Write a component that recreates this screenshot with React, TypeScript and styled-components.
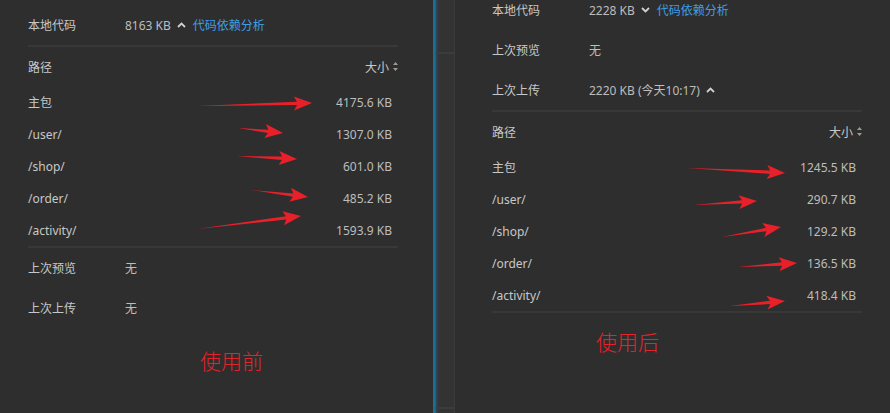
import styled, { createGlobalStyle } from "styled-components";

const GlobalStyle = createGlobalStyle`
  body {
    margin: 0;
    background: #2e2e2e;
    font-family: "Noto Sans", "Noto Sans CJK SC", sans-serif;
  }
`;

const Page = styled.div`
  position: relative;
  width: 890px;
  height: 413px;
  display: flex;
  overflow: hidden;
  background: #2e2e2e;
  font-size: 12px;
`;

const Pane = styled.div<{ $pad: number; $shift?: number }>`
  display: flex;
  flex-direction: column;
  padding-left: ${(p) => p.$pad}px;
  margin-top: ${(p) => p.$shift || 0}px;
  width: 370px;
  flex-shrink: 0;
`;

const Splitter = styled.div`
  width: 22px;
  flex-shrink: 0;
  margin-left: 35px;
  margin-right: 1px;
  background: linear-gradient(to right, #1f6d99 0, #1f6d99 2px, #2c4e61 3px, #33383b 5px, #333 7px);
  border-right: 1px solid #3a3a3a;
  display: flex;
  flex-direction: column;
  justify-content: space-between;
  padding: 52px 0 4px;
  box-sizing: border-box;

  span {
    display: block;
    height: 2px;
    margin-left: 3px;
    background: #3c3c3c;
  }
`;

const InfoRow = styled.div`
  height: 40px;
  display: flex;
  align-items: center;
  color: #c8c8c8;
`;

const Label = styled.div`
  width: 97px;
  flex-shrink: 0;
`;

const Value = styled.div`
  display: flex;
  align-items: center;
  gap: 6px;
  color: #bdbdbd;
`;

const Link = styled.span`
  color: #3f9fe6;
  margin-left: 1px;
`;

const Divider = styled.div`
  height: 2px;
  background: #383838;
`;

const HeadRow = styled.div`
  height: 39px;
  display: flex;
  align-items: center;
  justify-content: space-between;
  color: #c8c8c8;
`;

const SortBy = styled.div`
  display: flex;
  align-items: center;
  gap: 4px;
`;

const DataRow = styled.div`
  height: 32px;
  display: flex;
  align-items: center;
  justify-content: space-between;
  padding-right: 6px;
  color: #c8c8c8;

  span:last-child {
    color: #bdbdbd;
  }
`;

const Caption = styled.div<{ $left: number; $top: number }>`
  margin: ${(p) => p.$top}px 0 0 ${(p) => p.$left}px;
  font-family: "Noto Sans CJK SC", sans-serif;
  font-weight: 300;
  font-size: 21px;
  line-height: 24px;
  color: #e3242b;
`;

const Overlay = styled.svg`
  position: absolute;
  left: 0;
  top: 0;
  pointer-events: none;
`;

function Chevron({ up }: { up?: boolean }) {
  return (
    <svg width="9" height="6" viewBox="0 0 9 6">
      <path
        d={up ? "M1 5 L4.5 1.5 L8 5" : "M1 1 L4.5 4.5 L8 1"}
        fill="none"
        stroke="#d0d0d0"
        strokeWidth="1.8"
      />
    </svg>
  );
}

function SortIcon() {
  return (
    <svg width="5" height="9" viewBox="0 0 5 9">
      <path d="M2.5 0 L5 3 L0 3 Z M2.5 9 L5 6 L0 6 Z" fill="#9a9a9a" />
    </svg>
  );
}

// red annotation arrows drawn over the screenshot
function arrowPoints(x1: number, y1: number, x2: number, y2: number) {
  const dx = x2 - x1;
  const dy = y2 - y1;
  const len = Math.hypot(dx, dy);
  const ux = dx / len;
  const uy = dy / len;
  const nx = -uy;
  const ny = ux;
  const head = 15;
  const half = 7;
  const shaft = 1.7;
  const bx = x2 - ux * head;
  const by = y2 - uy * head;
  const hx = bx - ux * 3;
  const hy = by - uy * 3;
  const pts = [
    [x1, y1],
    [bx + nx * shaft, by + ny * shaft],
    [hx + nx * half, hy + ny * half],
    [x2, y2],
    [hx - nx * half, hy - ny * half],
    [bx - nx * shaft, by - ny * shaft],
  ];
  return pts.map((p) => p.map((v) => v.toFixed(1)).join(",")).join(" ");
}

const arrows = [
  [197, 106, 312, 103],
  [238, 128, 283, 133],
  [237, 156, 297, 159],
  [252, 190, 308, 197],
  [197, 229, 301, 216],
  [687, 168, 785, 173],
  [694, 205, 757, 201],
  [722, 237, 781, 227],
  [738, 267, 797, 263],
  [730, 306, 785, 301],
];

const before = [
  ["主包", "4175.6 KB"],
  ["/user/", "1307.0 KB"],
  ["/shop/", "601.0 KB"],
  ["/order/", "485.2 KB"],
  ["/activity/", "1593.9 KB"],
];

const after = [
  ["主包", "1245.5 KB"],
  ["/user/", "290.7 KB"],
  ["/shop/", "129.2 KB"],
  ["/order/", "136.5 KB"],
  ["/activity/", "418.4 KB"],
];

function Table({ rows }: { rows: string[][] }) {
  return (
    <>
      <HeadRow>
        <span>路径</span>
        <SortBy>
          大小 <SortIcon />
        </SortBy>
      </HeadRow>
      {rows.map(([path, size]) => (
        <DataRow key={path}>
          <span>{path}</span>
          <span>{size}</span>
        </DataRow>
      ))}
      <Divider />
    </>
  );
}

export default function App() {
  return (
    <>
      <GlobalStyle />
      <Page>
        <Pane $pad={28} $shift={5}>
          <InfoRow>
            <Label>本地代码</Label>
            <Value>
              8163 KB <Chevron up /> <Link>代码依赖分析</Link>
            </Value>
          </InfoRow>
          <Divider />
          <Table rows={before} />
          <InfoRow>
            <Label>上次预览</Label>
            <Value>无</Value>
          </InfoRow>
          <InfoRow>
            <Label>上次上传</Label>
            <Value>无</Value>
          </InfoRow>
          <Caption $left={172} $top={20}>使用前</Caption>
        </Pane>
        <Splitter>
          <span />
          <span />
        </Splitter>
        <Pane $pad={36} $shift={-10}>
          <InfoRow>
            <Label>本地代码</Label>
            <Value>
              2228 KB <Chevron /> <Link>代码依赖分析</Link>
            </Value>
          </InfoRow>
          <InfoRow>
            <Label>上次预览</Label>
            <Value>无</Value>
          </InfoRow>
          <InfoRow>
            <Label>上次上传</Label>
            <Value>
              2220 KB (今天10:17) <Chevron up />
            </Value>
          </InfoRow>
          <Divider />
          <Table rows={after} />
          <Caption $left={104} $top={16}>使用后</Caption>
        </Pane>
        <Overlay width="890" height="413">
          {arrows.map(([a, b, c, d], i) => (
            <polygon key={i} points={arrowPoints(a, b, c, d)} fill="#e8202a" />
          ))}
        </Overlay>
      </Page>
    </>
  );
}
